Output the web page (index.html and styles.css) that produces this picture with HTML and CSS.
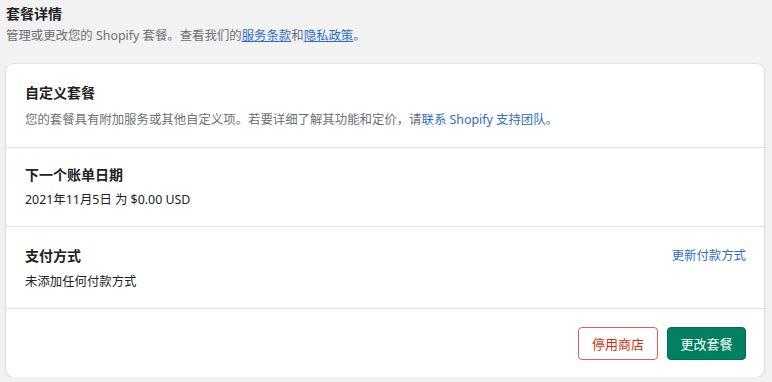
FILE: index.html
```html
<!DOCTYPE html>
<html lang="zh-CN">
<head>
<meta charset="utf-8">
<title>套餐详情</title>
<link rel="stylesheet" href="styles.css">
</head>
<body>
<div class="page">
  <header class="page-head">
    <h2 class="page-title">套餐详情</h2>
    <p class="page-sub">管理或更改您的 Shopify 套餐。查看我们的<a class="ulink" href="#">服务条款</a>和<a class="ulink" href="#">隐私政策</a>。</p>
  </header>
  <section class="card">
    <div class="sec sec-plan">
      <h3 class="sec-title">自定义套餐</h3>
      <p class="sec-text muted">您的套餐具有附加服务或其他自定义项。若要详细了解其功能和定价，请<a class="plink" href="#">联系 Shopify 支持团队</a>。</p>
    </div>
    <div class="sec sec-bill">
      <h3 class="sec-title">下一个账单日期</h3>
      <p class="sec-text">2021年11月5日 为 $0.00 USD</p>
    </div>
    <div class="sec sec-pay">
      <div class="sec-row">
        <h3 class="sec-title">支付方式</h3>
        <a class="plink action" href="#">更新付款方式</a>
      </div>
      <p class="sec-text">未添加任何付款方式</p>
    </div>
    <div class="sec footer">
      <button class="btn btn-danger">停用商店</button>
      <button class="btn btn-primary">更改套餐</button>
    </div>
  </section>
</div>
</body>
</html>
```
FILE: styles.css
```css
html, body {
  margin: 0;
  padding: 0;
  background: #f2f2f2;
}
body {
  font-family: "Noto Sans", "Noto Sans CJK SC", sans-serif;
  color: #202223;
  font-size: 12.4px;
}
.page {
  padding: 4px 8px 0 6px;
}
.page-head {
  display: flex;
  flex-direction: column;
  gap: 2px;
}
.page-title {
  margin: 0;
  font-size: 14px;
  line-height: 20px;
  font-weight: 700;
}
.page-sub {
  margin: 0;
  line-height: 20px;
  color: #6d7175;
}
.ulink {
  color: #2c6ecb;
  text-decoration: underline;
}
.plink {
  color: #2c6ecb;
  text-decoration: none;
}
.card {
  margin-top: 18px;
  background: #fff;
  border-radius: 8px;
  box-shadow: 0 0 0 1px rgba(63, 63, 68, 0.05), 0 1px 3px rgba(63, 63, 68, 0.15);
}
.sec {
  border-top: 1px solid #e1e3e5;
  display: flex;
  flex-direction: column;
}
.sec:first-child {
  border-top: none;
}
.sec-plan {
  padding: 19px 18px 17px 19px;
  gap: 7px;
}
.sec-bill {
  padding: 17px 18px 16px 19px;
  gap: 5px;
}
.sec-pay {
  padding: 19px 18px 16px 19px;
  gap: 6px;
}
.sec-row {
  display: flex;
  justify-content: space-between;
  align-items: center;
}
.sec-title {
  margin: 0;
  font-size: 14px;
  line-height: 20px;
  font-weight: 700;
}
.sec-text {
  margin: 0;
  line-height: 20px;
}
.muted {
  color: #6d7175;
}
.action {
  line-height: 20px;
}
.footer {
  flex-direction: row;
  justify-content: flex-end;
  gap: 9px;
  padding: 18px 18px 17px 19px;
}
.btn {
  font-family: inherit;
  font-size: 13px;
  height: 33px;
  padding: 0;
  border-radius: 4px;
  white-space: nowrap;
  cursor: pointer;
}
.btn-danger {
  background: #fff;
  color: #d82c0d;
  border: 1px solid #e85d4a;
  width: 80px;
}
.btn-primary {
  background: #008060;
  color: #fff;
  border: 1px solid #006e52;
  width: 79px;
}
```
